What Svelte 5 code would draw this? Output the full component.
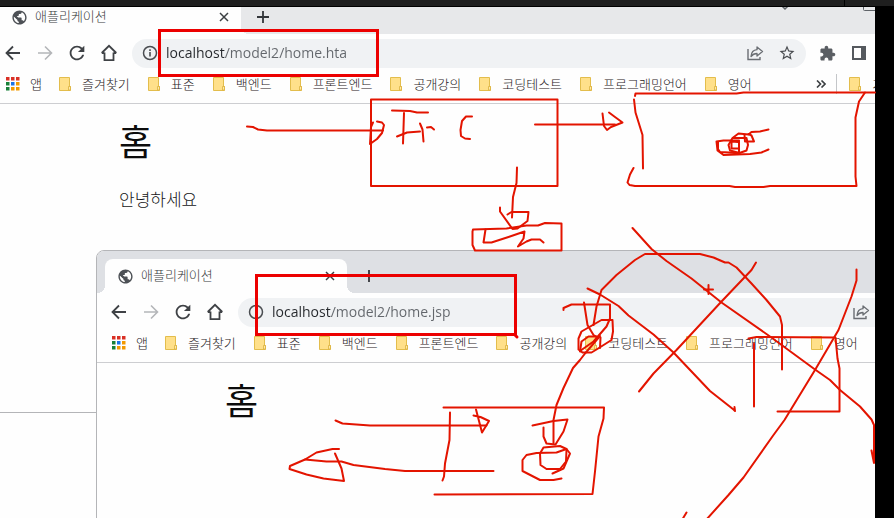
<script lang="ts">
    type Win = { id: string; path: string; greeting: string };

    const windows: Win[] = [
        { id: 'hta', path: 'localhost/model2/home.hta', greeting: '안녕하세요' },
        { id: 'jsp', path: 'localhost/model2/home.jsp', greeting: '' },
    ];

    const bookmarks = ['즐겨찾기', '표준', '백엔드', '프론트엔드', '공개강의', '코딩테스트', '프로그래밍언어', '영어'];

    const appColors = ['#d93025', '#d93025', '#d93025', '#188038', '#1a73e8', '#f29900', '#188038', '#f29900', '#f29900'];

    // pen strokes, one point list per stroke
    const strokes = [
        // request arrow and front controller
        '247,126.5 253,127 258,129.5 267,130.5 383,130.5',
        '373,122.5 371,127 370,144 377,139 382,133 384,125 382,122.5 377,121.5',
        '392,110.5 410,111 417,112.5 428,112.5',
        '404,113 403,143.5',
        '397,136.5 407,132.5 420,131.5',
        '420,123.5 422.5,129.5 423.5,141.5',
        '427,127.5 431,127 434,129.5',
        '472,116.5 466,116.5 462,121 460.5,130 461,136 465,138.5 470,139',
        '535,124.5 615,124.5',
        '602.5,113.5 604,126 607,130 611,127 622.5,122.5 615,117 609,112.5',
        '517,167.5 516.5,183 513,197 512,217.5',
        '500,207.5 500,211.5 512.5,229 517.5,228.5 527.5,221 528.5,212 511.5,212 507.5,214.5',
        '473,229.5 506.5,228.5 526.5,225.5 538,225.5 545,223 561.5,223.5 561.5,250.5 475,250.5 472.5,245 472.5,231.5 473,229.5',
        '485.5,229.5 483.5,242.5 491.5,242.5 508.5,237 524.5,231.5 523.5,238.5 518,246.5 526.5,241.5 531.5,239.5 540,239.5 543.5,242.5',
        // upper right box
        '635,96 635.5,93.5 736.5,93.5 743.5,92.5 875,92.5',
        '634,99.5 635.5,112.5 642.5,135 643,168.5',
        '633.5,168 630,174.5 627.5,182.5 629.5,185 635,186 729.5,186 735,187 763.5,187 770,186 856.5,186 855.5,176.5 855.5,117.5 859,101.5 865,92.5',
        '768.5,129.5 760,131.5 751.5,132 748.5,134.5 738.5,133.5 732.5,138 728.5,145 730,150.5 739.5,153 746.5,150.5 748,145 746.5,138 733.5,138',
        '768.5,149.5 761.5,152.5 750,154 723.5,155 717.5,150.5 716.5,141.5 723.5,140.5 739,140.5 739,153 720,152 718,149 718,142',
        '744.5,135 745,141.5 754,141.5 751.5,135.5 748.5,134',
        '738,142 731.5,141.5 731.5,148.5 738,148.5',
        // forward path over the second window
        '553.5,443 553.5,420 556.5,405 563.5,388 573,368 580,360 585,353.5 600,336',
        '593.5,325 596.5,306.5 601.5,290 616.5,275 635,260 645,254 700,254 713.5,257.5 725,262.5 728.5,262.5 736.5,267.5 751.5,283.5 766.5,300 780,316.5 782,325 782,369.5',
        '563.5,310 563.5,308 571.5,304.5 610,304.5 610,318.5 606.5,326.5 593.5,341.5 580,351',
        '584,302.5 587.5,325 593.5,335 597,337',
        '612.5,320 601.5,320 581.5,331.5 578.5,338.5 578.5,349.5 582.5,352.5 591.5,352.5 596.5,349.5 611.5,340 613,331.5 612.5,320',
        '580,351.5 581.5,341.5 588.5,336.5 596.5,336.5',
        '600.5,337.5 600,348',
        // crossings out
        '632.5,228 651.5,249 666.5,261 691.5,278.5 721.5,302.5 770,336.5 815,369.5 830,380 840,390 860,406.5 871.5,419.5 874,425 874,463 871.5,450.5',
        '587.5,288.5 600,294.5 618.5,306 628.5,315.5 653.5,334.5 673.5,352.5 710,391 733.5,409.5 735,411 734.5,407',
        '756,262.5 751.5,270 721.5,301.5 676.5,350 653.5,373.5 639,391.5',
        '856.5,269.5 856.5,280.5 851.5,296.5 838.5,330 815,370 784.5,420 773.5,435 743.5,477.5 728.5,495 706,520',
        '686.5,512.5 682,520',
        '754,343.5 754,406.5',
        '748.5,338.5 756.5,337 835.5,337.5 837.5,358.5 839.5,368.5 839.5,411.5 777.5,411.5',
        '704,289.5 713,289.5',
        '708.5,285 708.5,294',
        // lower box with its arrows
        '335.5,420.5 342.5,423.5 370,425.5 486.5,425.5',
        '473.5,415.5 480.5,417 489,421 482,432.5 476,409.5',
        '450,412.5 449.5,440 445,463.5 444,476.5 442.5,480.5',
        '443.5,407.5 604,407.5 603.5,418.5 598.5,436.5 595,471.5 592.5,494 434.5,494.5',
        '339,449 332.5,449 316.5,452.5 305,459.5 290,466 289.5,469 306.5,474.5 323.5,478.5 344,481 341.5,468.5 335,453.5',
        '305,459.5 326.5,461.5 341.5,461.5 353.5,465 385,469 405,471 493.5,471',
        '532.5,425.5 553.5,421 567.5,419.5 563.5,431.5 555.5,444.5 546.5,443.5 543.5,436.5 543.5,427.5',
        '561.5,478.5 553.5,480 540,480 522.5,471 522.5,460 526.5,455 536.5,453 556.5,452.5 566.5,449 570,453.5 563.5,468.5 552.5,473.5',
        '566.5,449 560,446 543.5,447.5 540,453.5 540.5,465 546.5,469 560,469 566,461.5 566.5,450',
    ];
</script>

{#snippet folder()}
    <svg width="12" height="14" viewBox="0 0 12 14">
        <path d="M.5.5h10v9h1v4H.5z" fill="#ffe08a" stroke="#e3bd4c" />
        <path d="M9.5 13V9.5h2V13z" fill="#ffe9a8" stroke="#dcb13c" stroke-width=".8" />
    </svg>
{/snippet}

{#snippet browser(win: Win)}
    <section class="window {win.id}">
        <div class="tabstrip">
            <div class="tab">
                <svg class="globe" width="17" height="17" viewBox="0 0 24 24">
                    <path fill="#4d5156" d="M12 2C6.48 2 2 6.48 2 12s4.48 10 10 10 10-4.48 10-10S17.52 2 12 2zm-1 17.93c-3.95-.49-7-3.85-7-7.93 0-.62.08-1.21.21-1.79L9 15v1c0 1.1.9 2 2 2v1.93zm6.9-2.54c-.26-.81-1-1.39-1.9-1.39h-1v-3c0-.55-.45-1-1-1H8v-2h2c.55 0 1-.45 1-1V7h2c1.1 0 2-.9 2-2v-.41c2.93 1.19 5 4.06 5 7.41 0 2.08-.8 3.97-2.1 5.39z" />
                    <path fill="#4d5156" d="M4 10.5L9 15l1-3-2-2 3-3V3L6 5z" />
                </svg>
                <span class="title">애플리케이션</span>
                <button class="close" aria-label="탭 닫기">
                    <svg width="10" height="10" viewBox="0 0 10 10"><path d="M1 1l8 8M9 1L1 9" fill="none" stroke="#3c4043" stroke-width="1.5" /></svg>
                </button>
            </div>
            <button class="new-tab" aria-label="새 탭">
                <svg width="12" height="12" viewBox="0 0 12 12"><path d="M6 0v12M0 6h12" stroke="#33363a" stroke-width="1.8" /></svg>
            </button>
            <div class="controls">
                <button aria-label="탭 검색"><svg width="10" height="10" viewBox="0 0 10 10"><path d="M1 4l4 4 4-4" fill="none" stroke="#5f6368" stroke-width="1.5" /></svg></button>
                <button aria-label="최소화"><svg width="10" height="10" viewBox="0 0 10 10"><path d="M0 5.5h10" stroke="#5f6368" /></svg></button>
                <button aria-label="최대화"><svg width="28" height="10" viewBox="0 0 28 10"><rect x=".5" y=".5" width="27" height="9" rx="1" fill="none" stroke="#5f6368" /></svg></button>
                <button aria-label="닫기"><svg width="10" height="10" viewBox="0 0 10 10"><path d="M0 0l10 10M10 0L0 10" stroke="#5f6368" /></svg></button>
            </div>
        </div>

        <div class="toolbar">
            <button aria-label="뒤로">
                <svg width="16" height="16" viewBox="0 0 16 16"><path d="M15 8H2M8 1.5L1.5 8 8 14.5" fill="none" stroke="#3f4246" stroke-width="1.8" /></svg>
            </button>
            <button aria-label="앞으로">
                <svg width="16" height="16" viewBox="0 0 16 16"><path d="M1 8h13M8 1.5L14.5 8 8 14.5" fill="none" stroke="#b4b6b9" stroke-width="1.6" /></svg>
            </button>
            <button aria-label="새로고침">
                <svg width="22" height="22" viewBox="0 0 24 24"><path fill="#3f4246" d="M17.65 6.35C16.2 4.9 14.21 4 12 4c-4.42 0-7.99 3.58-7.99 8s3.57 8 7.99 8c3.73 0 6.84-2.55 7.73-6h-2.08c-.82 2.33-3.04 4-5.65 4-3.31 0-6-2.69-6-6s2.69-6 6-6c1.66 0 3.14.69 4.22 1.78L13 11h7V4l-2.35 2.35z" /></svg>
            </button>
            <button aria-label="홈">
                <svg width="18" height="18" viewBox="0 0 18 18"><path d="M4.5 8.5v7.7h9V8.5M1.8 9.2h2.7M13.5 9.2h2.7M1.7 9L9 1.8 16.3 9" fill="none" stroke="#3f4246" stroke-width="1.8" /></svg>
            </button>
            <div class="omnibox">
                <svg width="16" height="16" viewBox="0 0 16 16">
                    <circle cx="8" cy="8" r="6.5" fill="none" stroke="#4a4d51" stroke-width="1.5" />
                    <path d="M8 7v4.5M8 4.2v1.7" stroke="#4a4d51" stroke-width="1.6" />
                </svg>
                <input type="text" value={win.path} aria-label="주소창" spellcheck="false" />
                <button aria-label="공유">
                    <svg width="18" height="16" viewBox="0 0 18 16">
                        <path d="M2 4v10.5h12V12" fill="none" stroke="#6a6e73" stroke-width="1.4" />
                        <path d="M11 2l5.5 4.5L11 11V8.5C8 8.5 6.5 9.5 5 11.5 5.3 7.5 7.5 5 11 4.7z" fill="none" stroke="#6a6e73" stroke-width="1.3" stroke-linejoin="round" />
                    </svg>
                </button>
                <button aria-label="북마크에 추가">
                    <svg width="18" height="18" viewBox="0 0 24 24"><path fill="#4a4d51" d="M22 9.24l-7.19-.62L12 2 9.19 8.63 2 9.24l5.46 4.73L5.82 21 12 17.27 18.18 21l-1.63-7.03L22 9.24zM12 15.4l-3.76 2.27 1-4.28-3.32-2.88 4.38-.38L12 6.1l1.71 4.04 4.38.38-3.32 2.88 1 4.28L12 15.4z" /></svg>
                </button>
            </div>
            <button aria-label="확장 프로그램">
                <svg width="17" height="17" viewBox="0 0 24 24"><path fill="#5a5e63" d="M20.5 11H19V7c0-1.1-.9-2-2-2h-4V3.5C13 2.12 11.88 1 10.5 1S8 2.12 8 3.5V5H4c-1.1 0-1.99.9-1.99 2v3.8H3.5c1.49 0 2.7 1.21 2.7 2.7s-1.21 2.7-2.7 2.7H2V20c0 1.1.9 2 2 2h3.8v-1.5c0-1.49 1.21-2.7 2.7-2.7 1.49 0 2.7 1.21 2.7 2.7V22H17c1.1 0 2-.9 2-2v-4h1.5c1.38 0 2.5-1.12 2.5-2.5S21.88 11 20.5 11z" /></svg>
            </button>
            <button aria-label="측면 패널">
                <svg width="14" height="14" viewBox="0 0 14 14"><path d="M1 1h12v12H1z" fill="none" stroke="#55595e" stroke-width="2" /><path d="M9 1h4v12H9z" fill="#55595e" /></svg>
            </button>
            <button aria-label="프로필"><svg width="16" height="16" viewBox="0 0 16 16"><circle cx="8" cy="8" r="8" fill="#5f6368" /></svg></button>
            <button aria-label="메뉴"><svg width="4" height="16" viewBox="0 0 4 16"><path d="M1 2h2v2H1zM1 7h2v2H1zM1 12h2v2H1z" fill="#5f6368" /></svg></button>
        </div>

        <nav class="bookmarks">
            <a class="apps" href="#apps">
                <svg width="14" height="14" viewBox="0 0 14 14">
                    {#each appColors as color, i}
                        <rect x={(i % 3) * 5} y={Math.floor(i / 3) * 5} width="3.5" height="3.5" fill={color} />
                    {/each}
                </svg>
                앱
            </a>
            {#each bookmarks as name}
                <a href="#{name}">{@render folder()}{name}</a>
            {/each}
            <button class="more" aria-label="북마크 더보기">
                <svg width="10" height="8" viewBox="0 0 10 8"><path d="M1 .5L4.5 4 1 7.5M5.5 .5L9 4 5.5 7.5" fill="none" stroke="#3c4043" stroke-width="1.6" /></svg>
            </button>
            <a class="other" href="#other">{@render folder()}기타 북마크</a>
        </nav>

        <article>
            <h1>홈</h1>
            {#if win.greeting}
                <p>{win.greeting}</p>
            {/if}
        </article>
    </section>
{/snippet}

<div class="screen">
    <header><i></i></header>
    <main>
        {#each windows as win}
            {@render browser(win)}
        {/each}
    </main>
    <svg class="ink">
        <rect x="371" y="99.5" width="186.5" height="86.5" />
        {#each strokes as points}
            <polyline {points} />
        {/each}
        <g class="marker">
            <rect x="159.5" y="30.5" width="218" height="45" />
            <rect x="256.5" y="275.5" width="259" height="59" />
            <path d="M515 335l2 2" />
        </g>
    </svg>
</div>

<style>
    :global(body) { background: #000; }

    .screen {
        position: relative;
        display: flex;
        flex-direction: column;
        height: 100vh;
        overflow: hidden;
        font-family: "Noto Sans CJK KR", sans-serif;
        font-weight: 300;
        background: #000;
    }

    header {
        height: 6px;
        margin-bottom: 1px;
        padding-right: 49px;
        display: flex;
        justify-content: flex-end;
        background: #1f1f1f;
    }
    header i { width: 1px; background: #000; }

    main {
        position: relative;
        flex: 1;
        margin-right: 19px;
        overflow: hidden;
        background: #fefefe;
    }

    button {
        display: flex;
        align-items: center;
        justify-content: center;
        width: 32px;
        height: 28px;
        padding: 0;
        border: 0;
        background: none;
        flex-shrink: 0;
    }

    svg { flex-shrink: 0; }

    /* both windows run off the right edge of the desktop */
    .window {
        position: absolute;
        box-sizing: border-box;
        width: calc(100% + 85px);
        height: 422px;
        border: 1px solid #b4b5b8;
        border-radius: 8px 8px 0 0;
        background: #fefefe;
        overflow: hidden;
    }
    .hta { left: -10px; top: -16px; }
    .jsp { left: 96px; top: 243px; }

    .tabstrip {
        display: flex;
        height: 42px;
        padding: 0 3px 0 8px;
        background: #dee0e4;
    }
    .hta .tabstrip { background: #e7e8ea; }

    .tab {
        position: relative;
        display: flex;
        align-items: center;
        box-sizing: border-box;
        width: 242px;
        height: 34px;
        margin-top: 8px;
        padding: 0 6px 0 12px;
        border-radius: 8px 8px 0 0;
        background: #fefefe;
    }
    .tab::before, .tab::after {
        content: "";
        position: absolute;
        bottom: 0;
        width: 8px;
        height: 8px;
    }
    .tab::before { left: -8px; background: radial-gradient(circle at 0 0, transparent 8px, #fefefe 8px); }
    .tab::after { right: -8px; background: radial-gradient(circle at 100% 0, transparent 8px, #fefefe 8px); }

    .title {
        flex: 1;
        margin-left: 7px;
        padding-bottom: 2px;
        font-size: 13px;
        line-height: 20px;
        color: #3a3d40;
    }
    .close { width: 22px; height: 22px; }
    .new-tab { height: 34px; margin: 8px 0 0 6px; }

    .controls { display: flex; margin-left: auto; }
    .controls button { width: 46px; }

    .toolbar {
        display: flex;
        align-items: center;
        height: 38px;
        padding: 0 10px 0 6px;
    }

    .omnibox {
        display: flex;
        align-items: center;
        flex: 1;
        height: 29px;
        margin: 0 5px 0 7px;
        padding: 0 3px 0 10px;
        border-radius: 15px;
        background: #f0f2f4;
    }

    /* host part dark, the rest of the path grey */
    input {
        flex: 1;
        min-width: 0;
        height: 24px;
        margin-left: 8px;
        padding: 0;
        border: 0;
        outline: 0;
        font: 14px/24px "Open Sans", sans-serif;
        color: transparent;
        background: linear-gradient(90deg, #25282c 59px, #62666b 59px);
        background-clip: text;
    }

    .bookmarks {
        display: flex;
        align-items: center;
        gap: 18px;
        box-sizing: border-box;
        height: 32px;
        padding: 0 14px 7px 15px;
        border-bottom: 1px solid #cdced1;
    }
    .bookmarks a {
        display: flex;
        align-items: center;
        gap: 11px;
        font-size: 13px;
        line-height: 20px;
        white-space: nowrap;
        color: #1f2124;
        text-decoration: none;
    }
    .bookmarks .apps { gap: 10px; margin-right: -1px; }
    .bookmarks .more { width: 10px; height: 20px; margin-left: auto; margin-right: -8px; }
    .bookmarks .other { padding-left: 12px; border-left: 1px solid #c4c6c9; }

    article { padding: 10px 128px; }
    h1 {
        margin: 0;
        font-size: 36px;
        font-weight: 400;
        line-height: 52px;
        color: #0c0c0c;
    }
    p {
        margin: 20px 0 0;
        font-size: 17px;
        line-height: 26px;
        color: #151618;
    }

    .ink {
        position: absolute;
        inset: 0;
        width: 100%;
        height: 100%;
        fill: none;
        stroke: #e31400;
        stroke-width: 2;
        stroke-linejoin: round;
        stroke-linecap: round;
        pointer-events: none;
    }
    .marker {
        stroke: #ec0000;
        stroke-width: 3;
        stroke-linejoin: miter;
    }
</style>
